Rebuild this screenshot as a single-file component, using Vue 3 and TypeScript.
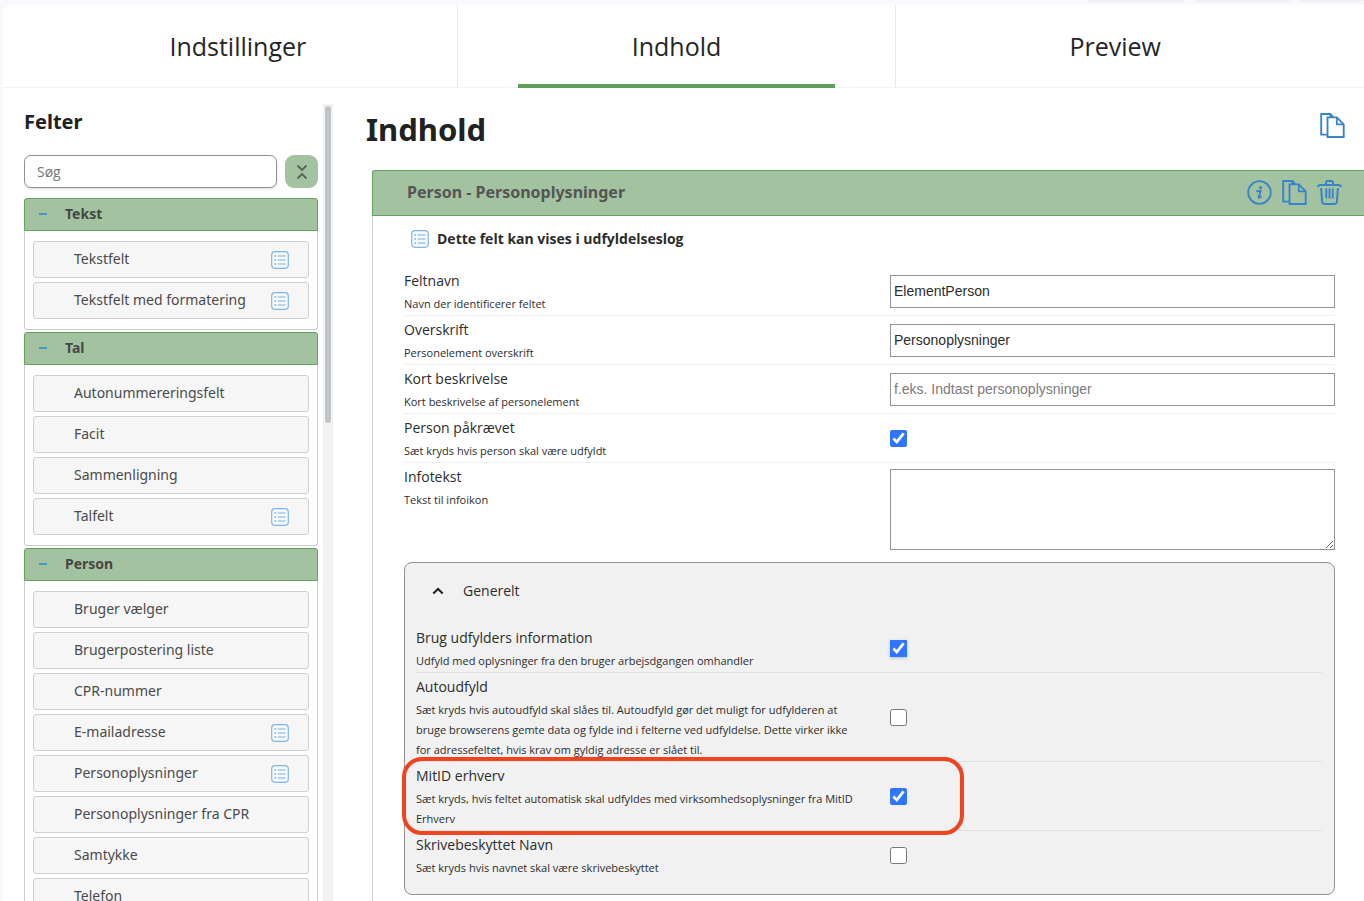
<script setup lang="ts">
import { ref } from 'vue'

interface FieldItem {
  name: string
  log?: boolean
}
interface FieldGroup {
  title: string
  items: FieldItem[]
}

const tabs = ['Indstillinger', 'Indhold', 'Preview']
const active = ref('Indhold')
const query = ref('')

const groups: FieldGroup[] = [
  {
    title: 'Tekst',
    items: [
      { name: 'Tekstfelt', log: true },
      { name: 'Tekstfelt med formatering', log: true },
    ],
  },
  {
    title: 'Tal',
    items: [
      { name: 'Autonummereringsfelt' },
      { name: 'Facit' },
      { name: 'Sammenligning' },
      { name: 'Talfelt', log: true },
    ],
  },
  {
    title: 'Person',
    items: [
      { name: 'Bruger vælger' },
      { name: 'Brugerpostering liste' },
      { name: 'CPR-nummer' },
      { name: 'E-mailadresse', log: true },
      { name: 'Personoplysninger', log: true },
      { name: 'Personoplysninger fra CPR' },
      { name: 'Samtykke' },
      { name: 'Telefon' },
    ],
  },
]

const textRows = ref([
  { id: 'feltnavn', label: 'Feltnavn', help: 'Navn der identificerer feltet', value: 'ElementPerson', placeholder: '' },
  { id: 'overskrift', label: 'Overskrift', help: 'Personelement overskrift', value: 'Personoplysninger', placeholder: '' },
  { id: 'kort', label: 'Kort beskrivelse', help: 'Kort beskrivelse af personelement', value: '', placeholder: 'f.eks. Indtast personoplysninger' },
])

const required = ref(true)
const info = ref('')

const generalRows = ref([
  { id: 'brug', label: 'Brug udfylders information', help: 'Udfyld med oplysninger fra den bruger arbejsdgangen omhandler', on: true, focused: true, marked: false },
  { id: 'auto', label: 'Autoudfyld', help: 'Sæt kryds hvis autoudfyld skal slåes til. Autoudfyld gør det muligt for udfylderen at bruge browserens gemte data og fylde ind i felterne ved udfyldelse. Dette virker ikke for adressefeltet, hvis krav om gyldig adresse er slået til.', on: false, focused: false, marked: false },
  { id: 'mitid', label: 'MitID erhverv', help: 'Sæt kryds, hvis feltet automatisk skal udfyldes med virksomhedsoplysninger fra MitID Erhverv', on: true, focused: false, marked: true },
  { id: 'skriv', label: 'Skrivebeskyttet Navn', help: 'Sæt kryds hvis navnet skal være skrivebeskyttet', on: false, focused: false, marked: false },
])
</script>

<template>
  <svg class="symbols" aria-hidden="true">
    <symbol id="i-list" viewBox="0 0 18 18">
      <rect x="0.7" y="0.7" width="16.6" height="16.6" rx="3.2" fill="#f4f9fe" stroke="#82b5e4" stroke-width="1.2" />
      <path d="M6.6 5h8M6.6 9h8M6.6 13h8" stroke="#7aaee0" stroke-width="1.1" fill="none" />
      <path d="M3.4 5h1.6M3.4 9h1.6M3.4 13h1.6" stroke="#7aaee0" stroke-width="1.3" fill="none" />
    </symbol>
    <symbol id="i-copy" viewBox="0 0 25 25">
      <path d="M7.5 21.6H1.2V1h9.2l2.8 3.2M10.4 1v3.2" fill="none" stroke="currentColor" stroke-width="1.9" />
      <path d="M7.5 4.4h9.3l6.900 6.900V24H7.500z" fill="none" stroke="currentColor" stroke-width="1.9" />
      <path d="M16.800 4.400v6.900h6.900" fill="none" stroke="currentColor" stroke-width="1.800" />
    </symbol>
    <symbol id="i-info" viewBox="0 0 25 25">
      <circle cx="12.5" cy="12.5" r="11.3" fill="none" stroke="currentColor" stroke-width="1.8" />
      <circle cx="13.6" cy="7.6" r="1.6" fill="currentColor" />
      <path d="M10 11.3l3.7-.6-1.9 6.4c-.3 1.1.5 1.2 2.2-.5" fill="none" stroke="currentColor" stroke-width="1.9" stroke-linecap="round" stroke-linejoin="round" />
    </symbol>
    <symbol id="i-trash" viewBox="0 0 25 25">
      <path d="M1 7.2c.2-1.6.9-2.3 2.4-2.3h18.2c1.5 0 2.2.7 2.4 2.3" fill="none" stroke="currentColor" stroke-width="2" />
      <path d="M9 4.7V3c0-1.300.6-1.900 1.900-1.900h3.200c1.300 0 1.900.6 1.900 1.900v1.700" fill="none" stroke="currentColor" stroke-width="2" />
      <path d="M4.100 8l1 13.800c.1 1.400.9 2.100 2.200 2.100h10.400c1.300 0 2.100-.7 2.200-2.100l1-13.800" fill="none" stroke="currentColor" stroke-width="2" />
      <path d="M9.300 8.500v10M12.500 8.500v10M15.700 8.500v10" fill="none" stroke="currentColor" stroke-width="1.9" />
    </symbol>
  </svg>

  <div class="page">
    <div class="topstrip"><span></span><span></span><span></span></div>
    <div class="card">
      <nav class="tabs">
        <button v-for="t in tabs" :key="t" type="button" class="tab" :class="{ active: t === active }" @click="active = t">
          {{ t }}
        </button>
      </nav>

      <div class="body">
        <aside class="side">
          <div class="sidecontent">
            <h2>Felter</h2>
            <div class="search">
              <input v-model="query" type="text" placeholder="Søg" aria-label="Søg" />
              <button type="button" class="collapse" aria-label="Fold sammen">
                <svg width="12" height="16" viewBox="0 0 12 16">
                  <path d="M1.5 1.5L6 6l4.500-4.500M1.500 14.500L6 10l4.500 4.500" fill="none" stroke="#56655a" stroke-width="1.8" />
                </svg>
              </button>
            </div>
            <section v-for="g in groups" :key="g.title" class="group">
              <button type="button" class="grouphead"><i class="minus"></i>{{ g.title }}</button>
              <div class="groupbody">
                <button v-for="it in g.items" :key="it.name" type="button" class="item">
                  <span>{{ it.name }}</span>
                  <svg v-if="it.log" class="list"><use href="#i-list" /></svg>
                </button>
              </div>
            </section>
          </div>
          <div class="track"><div class="thumb"></div></div>
        </aside>

        <main class="main">
          <header class="mainhead">
            <h1>Indhold</h1>
            <button type="button" class="icon" aria-label="Kopier"><svg><use href="#i-copy" /></svg></button>
          </header>

          <section class="panel">
            <header class="panelhead">
              <h3>Person - Personoplysninger</h3>
              <div class="actions">
                <button type="button" class="icon" aria-label="Information"><svg><use href="#i-info" /></svg></button>
                <button type="button" class="icon" aria-label="Kopier felt"><svg><use href="#i-copy" /></svg></button>
                <button type="button" class="icon" aria-label="Slet"><svg><use href="#i-trash" /></svg></button>
              </div>
            </header>

            <div class="form">
              <p class="lognote"><svg class="list"><use href="#i-list" /></svg>Dette felt kan vises i udfyldelseslog</p>

              <div v-for="r in textRows" :key="r.id" class="row">
                <div class="text">
                  <label :for="r.id">{{ r.label }}</label>
                  <small>{{ r.help }}</small>
                </div>
                <input :id="r.id" v-model="r.value" type="text" class="field" :placeholder="r.placeholder" />
              </div>

              <div class="row">
                <div class="text">
                  <label for="required">Person påkrævet</label>
                  <small>Sæt kryds hvis person skal være udfyldt</small>
                </div>
                <input id="required" v-model="required" type="checkbox" />
              </div>

              <div class="row inforow">
                <div class="text">
                  <label for="info">Infotekst</label>
                  <small>Tekst til infoikon</small>
                </div>
                <textarea id="info" v-model="info" class="field"></textarea>
              </div>

              <section class="general">
                <button type="button" class="generalhead">
                  <svg width="12" height="8" viewBox="0 0 12 8">
                    <path d="M1.3 6.5L6 2l4.700 4.500" fill="none" stroke="#1d1f1e" stroke-width="2" />
                  </svg>
                  Generelt
                </button>
                <div v-for="r in generalRows" :key="r.id" class="row">
                  <div class="text">
                    <label :for="r.id">{{ r.label }}</label>
                    <small>{{ r.help }}</small>
                  </div>
                  <input :id="r.id" v-model="r.on" type="checkbox" :class="{ focused: r.focused }" />
                  <span v-if="r.marked" class="marker"></span>
                </div>
              </section>
            </div>
          </section>
        </main>
      </div>
    </div>
  </div>
</template>

<style>
body {
  margin: 0;
  background: #f8f9fc;
}
</style>

<style scoped>
* {
  box-sizing: border-box;
}
h1,
h2,
h3,
p {
  margin: 0;
}
button,
input,
textarea {
  font: inherit;
  color: inherit;
  margin: 0;
}
button {
  border: 0;
  background: none;
  padding: 0;
  cursor: pointer;
}
.symbols {
  position: absolute;
  width: 0;
  height: 0;
}
.page {
  height: 100vh;
  overflow: hidden;
  display: flex;
  flex-direction: column;
  padding-left: 3px;
  font-family: 'Open Sans', 'Noto Sans', sans-serif;
  font-size: 14px;
  color: #2b2d2c;
}
.topstrip {
  flex: none;
  height: 5px;
  display: flex;
  justify-content: flex-end;
  gap: 10px;
}
.topstrip span {
  width: 96px;
  height: 2px;
  background: #eff0f3;
  border-radius: 0 0 4px 4px;
}
.topstrip span:last-child {
  width: 64px;
}
.card {
  flex: 1;
  min-height: 0;
  display: flex;
  flex-direction: column;
  background: #fff;
  border-top-left-radius: 8px;
}
.tabs {
  flex: none;
  display: flex;
  height: 83px;
  padding: 0 30px 0 16px;
  border-bottom: 1px solid #f1f2f4;
}
.tab {
  flex: 1;
  position: relative;
  font-size: 25px;
  border-right: 1px solid #e3e8f0;
  color: #242625;
}
.tab:last-child {
  border-right: 0;
}
.tab.active::after {
  content: '';
  position: absolute;
  left: 60px;
  right: 60px;
  bottom: -1px;
  height: 4px;
  background: #5f9e5b;
}
.body {
  flex: 1;
  min-height: 0;
  display: flex;
}
.side {
  flex: none;
  width: 330px;
  display: flex;
  gap: 5px;
  padding: 16px 0 0 21px;
}
.sidecontent {
  flex: 1;
  min-width: 0;
  overflow: hidden;
}
.track {
  width: 10px;
  padding: 2px;
  background: #f1f1f1;
}
.thumb {
  height: 40%;
  border-radius: 3px;
  background: #bfc4c9;
}
h2 {
  font-family: 'Noto Sans', sans-serif;
  font-size: 20px;
  line-height: 36px;
  color: #202221;
}
.search {
  display: flex;
  gap: 8px;
  margin-top: 15px;
  height: 33px;
}
.search input {
  flex: 1;
  min-width: 0;
  height: 33px;
  padding: 0 12px;
  border: 1px solid #8e9092;
  border-radius: 7px;
  background: #fff;
  box-shadow: 0 1px 3px rgba(0, 0, 0, 0.14);
  outline: none;
}
.search input::placeholder {
  color: #757575;
}
.collapse {
  width: 33px;
  display: grid;
  place-items: center;
  border-radius: 9px;
  background: #a3c2a0;
}
.group {
  margin-bottom: 2px;
  font-family: 'Noto Sans', sans-serif;
  color: #4a4a4a;
}
.search + .group {
  margin-top: 10px;
}
.grouphead {
  display: flex;
  align-items: center;
  gap: 18px;
  width: 100%;
  height: 33px;
  padding: 0 14px 2px;
  border: 1px solid #62a15e;
  border-radius: 3px 3px 0 0;
  background: #a3c2a0;
  font-weight: 700;
  color: #464646;
}
.minus {
  width: 8px;
  height: 2px;
  background: #4b93cc;
}
.groupbody {
  display: flex;
  flex-direction: column;
  gap: 4px;
  padding: 10px 8px;
  border: 1px solid #cbcbcb;
  border-top: 0;
  border-radius: 0 0 3px 3px;
}
.item {
  display: flex;
  align-items: center;
  justify-content: space-between;
  height: 37px;
  padding: 0 19px 0 40px;
  border: 1px solid #cfcfcf;
  border-radius: 3px;
  background: #f6f6f6;
}
.item span {
  padding-bottom: 2px;
}
.list {
  flex: none;
  width: 18px;
  height: 18px;
}
.main {
  flex: 1;
  min-width: 0;
  padding-left: 33px;
  overflow: hidden;
}
.mainhead {
  display: flex;
  align-items: center;
  justify-content: space-between;
  height: 82px;
  padding-right: 19px;
}
h1 {
  font-family: 'Noto Sans', sans-serif;
  font-size: 31px;
  line-height: 40px;
  color: #202221;
}
.icon {
  width: 25px;
  height: 25px;
  color: #3884cb;
}
.icon svg {
  display: block;
  width: 25px;
  height: 25px;
}
.mainhead .icon {
  margin-bottom: 8px;
}
.panel {
  margin-left: 6px;
  border-left: 1px solid #cfcfcf;
  border-top-left-radius: 3px;
}
.panelhead {
  display: flex;
  align-items: center;
  justify-content: space-between;
  height: 46px;
  margin-left: -1px;
  padding: 0 22px 2px 34px;
  border: 1px solid #62a15e;
  border-right: 0;
  border-top-left-radius: 3px;
  background: #a3c2a0;
}
h3 {
  font-family: 'Noto Sans', sans-serif;
  font-size: 16px;
  color: #555;
}
.actions {
  display: flex;
  gap: 10px;
}
.form {
  padding: 0 29px 20px 31px;
}
.lognote {
  display: flex;
  align-items: center;
  gap: 8px;
  height: 45px;
  margin-bottom: 6px;
  padding-left: 7px;
  font-weight: 700;
}
.row {
  position: relative;
  display: grid;
  grid-template-columns: 486fr 445fr;
  align-items: center;
  justify-items: start;
  border-bottom: 1px solid #f0f0f0;
}
.text {
  display: flex;
  flex-direction: column;
  gap: 2px;
  padding: 2px 34px 1px 0;
}
.text label {
  line-height: 23px;
}
.text small {
  font-size: 11px;
  line-height: 20px;
}
.field {
  width: 100%;
  height: 33px;
  padding: 0 3px;
  border: 1px solid #949494;
  border-radius: 0;
  background: #fff;
  font-family: 'Liberation Sans', Arial, sans-serif;
  outline: none;
}
.field::placeholder {
  color: #7b7b7b;
}
.inforow {
  align-items: start;
  border-bottom: 0;
}
textarea.field {
  display: block;
  height: 81px;
  margin: 6px 0 12px;
  resize: both;
}
input[type='checkbox'] {
  width: 17px;
  height: 17px;
  accent-color: #2f75ff;
}
input.focused {
  outline: 1px solid #2f75ff;
  outline-offset: -1px;
  box-shadow: 0 1px 3px rgba(47, 117, 255, 0.4);
}
.general {
  padding: 0 12px 15px 11px;
  border: 1px solid #929292;
  border-radius: 8px;
  background: #f1f1f1;
}
.generalhead {
  display: flex;
  align-items: center;
  gap: 19px;
  width: 100%;
  height: 55px;
  margin-bottom: 6px;
  padding-left: 16px;
}
.general .row {
  grid-template-columns: 474fr 432fr;
  border-bottom-color: #e1e1e1;
}
.general .row:last-child {
  border-bottom: 0;
}
.marker {
  position: absolute;
  left: -14px;
  top: -5px;
  bottom: -5px;
  width: 62%;
  border: 4px solid #f0431f;
  border-radius: 20px;
  pointer-events: none;
}
</style>
